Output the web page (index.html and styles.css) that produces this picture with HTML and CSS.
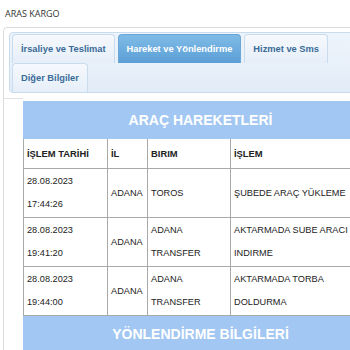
FILE: index.html
```html
<!DOCTYPE html>
<html lang="tr">
<head>
    <meta charset="UTF-8">
    <meta name="viewport" content="width=device-width, initial-scale=1.0">
    <title>Aras Kargo - Gönderi Takip</title>
    <link rel="stylesheet" href="styles.css">
</head>
<body>

<div class="brand">ARAS KARGO</div>

<div class="tabs">
    <div class="tab-nav-wrap">
        <ul class="tab-nav">
            <li class="tab">İrsaliye ve Teslimat</li>
            <li class="tab active">Hareket ve Yönlendirme</li>
            <li class="tab">Hizmet ve Sms</li>
            <li class="tab">Diğer Bilgiler</li>
        </ul>
    </div>

    <div class="tab-panel">
        <div class="rule"></div>
        <table class="moves">
            <thead>
            <tr>
                <th colspan="4" class="title">ARAÇ HAREKETLERİ</th>
            </tr>
            <tr class="cols">
                <th class="c-date">İŞLEM TARİHİ</th>
                <th class="c-city">İL</th>
                <th class="c-unit">BIRIM</th>
                <th class="c-op">İŞLEM</th>
            </tr>
            </thead>
            <tbody>
            <tr>
                <td>28.08.2023<br>17:44:26</td>
                <td>ADANA</td>
                <td>TOROS</td>
                <td>ŞUBEDE ARAÇ YÜKLEME</td>
            </tr>
            <tr>
                <td>28.08.2023<br>19:41:20</td>
                <td>ADANA</td>
                <td>ADANA TRANSFER</td>
                <td>AKTARMADA SUBE ARACI INDIRME</td>
            </tr>
            <tr>
                <td>28.08.2023<br>19:44:00</td>
                <td>ADANA</td>
                <td>ADANA TRANSFER</td>
                <td>AKTARMADA TORBA DOLDURMA</td>
            </tr>
            <tr>
                <th colspan="4" class="title">YÖNLENDİRME BİLGİLERİ</th>
            </tr>
            </tbody>
        </table>
    </div>
</div>

</body>
</html>
```

FILE: styles.css
```css
html, body {
    margin: 0;
    padding: 0;
    overflow: hidden;
    background: #fff;
}
body {
    font-family: "Liberation Sans", Arial, sans-serif;
    width: 420px;
}
.brand {
    font-family: "Open Sans", "Liberation Sans", sans-serif;
    font-size: 9px;
    line-height: 12px;
    color: #333;
    padding: 8px 0 0 5px;
    height: 19px;
}
.tabs {
    margin-left: 3px;
    border: 1px solid #dcdcdc;
    border-radius: 4px;
    height: 400px;
}
.tab-nav-wrap {
    padding: 4px 0 0 5px;
}
.tab-nav {
    list-style: none;
    margin: 0;
    padding: 1px 2px 0;
    width: 376px;
    display: flex;
    flex-wrap: wrap;
    border: 1px solid #c9dcee;
    border-radius: 4px;
    background: linear-gradient(#eef4fb, #e2ecf7);
}
.tab {
    font-size: 9.3px;
    font-weight: bold;
    color: #3a6b98;
    height: 28px;
    line-height: 28px;
    padding: 0 8px;
    margin-right: 3px;
    border: 1px solid #c9dcee;
    border-bottom: none;
    border-radius: 4px 4px 0 0;
    background: linear-gradient(#f6f9fd, #e6eef8);
    white-space: nowrap;
}
.tab.active {
    color: #fff;
    border-color: #6aa6d8;
    background: linear-gradient(#7fbbe7, #5b9fd6);
}
.tab-panel {
    display: flex;
    align-items: flex-start;
    padding-top: 5px;
}
.rule {
    width: 19px;
    border-top: 1px solid #e2e2e2;
}
.moves {
    margin-top: 3px;
    width: 355px;
    border-collapse: collapse;
    font-size: 9.2px;
    color: #222;
}
.moves td, .cols th {
    border: 1px solid #a9a9a9;
    text-align: left;
    vertical-align: middle;
}
.moves .title {
    background: #a2c7f2;
    border: 1px solid #a2c7f2;
    color: #fff;
    font-size: 14px;
    font-weight: bold;
    height: 36px;
    padding: 0;
    text-align: center;
}
.cols th {
    font-size: 9.4px;
    height: 29px;
    padding: 0 3px;
}
.moves td {
    line-height: 23px;
    padding: 1px 3px;
}
.c-date { width: 77px; }
.c-city { width: 33px; }
.c-unit { width: 76px; }
```
